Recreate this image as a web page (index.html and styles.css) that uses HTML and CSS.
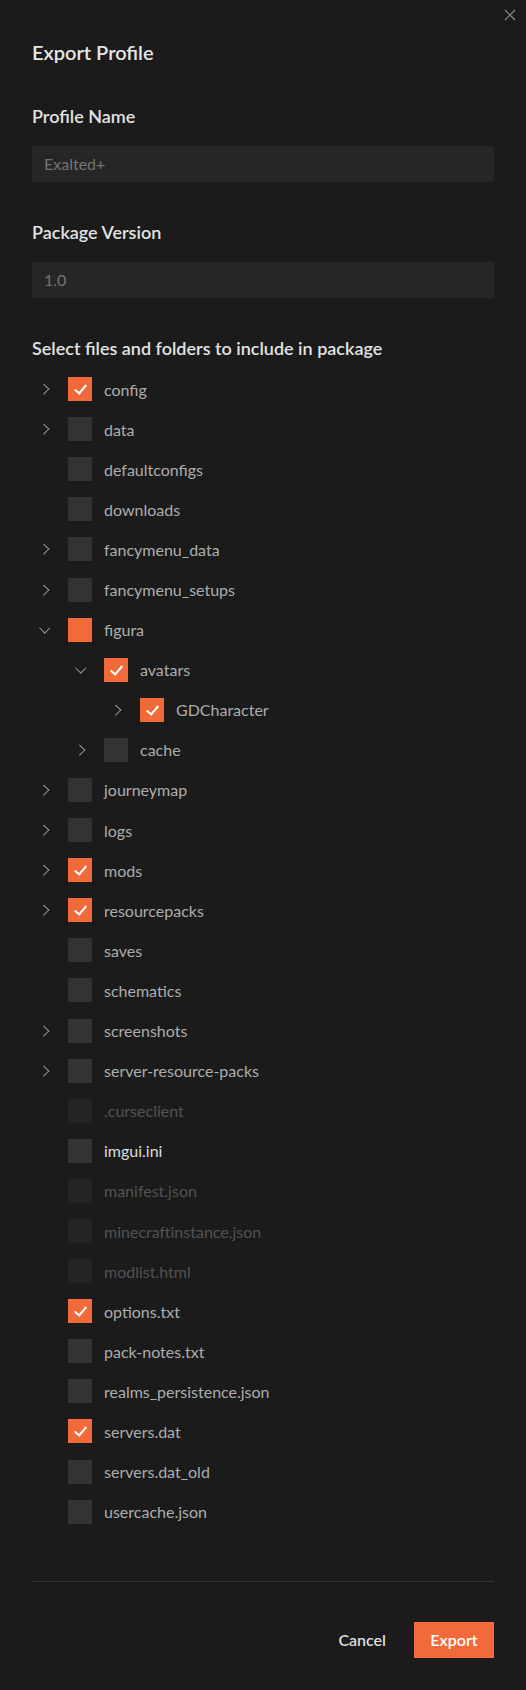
FILE: index.html
```html
<!DOCTYPE html>
<html>
<head>
<meta charset="utf-8">
<link rel="stylesheet" href="styles.css">
</head>
<body>
<div class="dialog">
  <button class="close" aria-label="Close">
    <svg width="12" height="12" viewBox="0 0 12 12"><path d="M1 1L11 11M11 1L1 11" stroke="#8a8a8a" stroke-width="1.2" fill="none"/></svg>
  </button>
  <h1 class="title">Export Profile</h1>

  <label class="label">Profile Name</label>
  <div class="input">Exalted+</div>

  <label class="label">Package Version</label>
  <div class="input">1.0</div>

  <label class="label">Select files and folders to include in package</label>

  <ul class="tree">
    <li class="row"><span class="chev right"></span><span class="cb on"></span><span class="name">config</span></li>
    <li class="row"><span class="chev right"></span><span class="cb"></span><span class="name">data</span></li>
    <li class="row"><span class="chev"></span><span class="cb"></span><span class="name">defaultconfigs</span></li>
    <li class="row"><span class="chev"></span><span class="cb"></span><span class="name">downloads</span></li>
    <li class="row"><span class="chev right"></span><span class="cb"></span><span class="name">fancymenu_data</span></li>
    <li class="row"><span class="chev right"></span><span class="cb"></span><span class="name">fancymenu_setups</span></li>
    <li class="row"><span class="chev down"></span><span class="cb partial"></span><span class="name">figura</span></li>
    <li class="row lvl1"><span class="chev down"></span><span class="cb on"></span><span class="name">avatars</span></li>
    <li class="row lvl2"><span class="chev right"></span><span class="cb on"></span><span class="name">GDCharacter</span></li>
    <li class="row lvl1"><span class="chev right"></span><span class="cb"></span><span class="name">cache</span></li>
    <li class="row"><span class="chev right"></span><span class="cb"></span><span class="name">journeymap</span></li>
    <li class="row"><span class="chev right"></span><span class="cb"></span><span class="name">logs</span></li>
    <li class="row"><span class="chev right"></span><span class="cb on"></span><span class="name">mods</span></li>
    <li class="row"><span class="chev right"></span><span class="cb on"></span><span class="name">resourcepacks</span></li>
    <li class="row"><span class="chev"></span><span class="cb"></span><span class="name">saves</span></li>
    <li class="row"><span class="chev"></span><span class="cb"></span><span class="name">schematics</span></li>
    <li class="row"><span class="chev right"></span><span class="cb"></span><span class="name">screenshots</span></li>
    <li class="row"><span class="chev right"></span><span class="cb"></span><span class="name">server-resource-packs</span></li>
    <li class="row disabled"><span class="chev"></span><span class="cb"></span><span class="name">.curseclient</span></li>
    <li class="row hover"><span class="chev"></span><span class="cb"></span><span class="name">imgui.ini</span></li>
    <li class="row disabled"><span class="chev"></span><span class="cb"></span><span class="name">manifest.json</span></li>
    <li class="row disabled"><span class="chev"></span><span class="cb"></span><span class="name">minecraftinstance.json</span></li>
    <li class="row disabled"><span class="chev"></span><span class="cb"></span><span class="name">modlist.html</span></li>
    <li class="row"><span class="chev"></span><span class="cb on"></span><span class="name">options.txt</span></li>
    <li class="row"><span class="chev"></span><span class="cb"></span><span class="name">pack-notes.txt</span></li>
    <li class="row"><span class="chev"></span><span class="cb"></span><span class="name">realms_persistence.json</span></li>
    <li class="row"><span class="chev"></span><span class="cb on"></span><span class="name">servers.dat</span></li>
    <li class="row"><span class="chev"></span><span class="cb"></span><span class="name">servers.dat_old</span></li>
    <li class="row"><span class="chev"></span><span class="cb"></span><span class="name">usercache.json</span></li>
  </ul>

  <div class="footer">
    <button class="btn cancel">Cancel</button>
    <button class="btn primary">Export</button>
  </div>
</div>
</body>
</html>
```

FILE: styles.css
```css
* { box-sizing: border-box; }
html, body {
  margin: 0;
  padding: 0;
  background: #1b1b1b;
}
body {
  font-family: Lato, "Open Sans", sans-serif;
  color: #aaaaaa;
}
.dialog {
  position: relative;
  width: 526px;
  min-height: 1690px;
  padding: 38px 32px 32px 32px;
  display: flex;
  flex-direction: column;
}
.close {
  position: absolute;
  top: 8px;
  right: 9px;
  width: 14px;
  height: 14px;
  padding: 1px;
  border: 0;
  background: none;
  display: flex;
}
.title {
  margin: 0 0 38px;
  font-size: 20px;
  line-height: 28px;
  font-weight: 600;
  color: #e6e6e6;
}
.label {
  display: block;
  font-size: 18px;
  line-height: 24px;
  font-weight: 600;
  color: #e2e2e2;
  margin-bottom: 18px;
}
.input {
  height: 36px;
  background: #262626;
  color: #747474;
  font-size: 16px;
  line-height: 36px;
  padding-left: 12px;
  margin-bottom: 38px;
}
.tree {
  list-style: none;
  margin: -9px 0 0;
  padding: 0;
}
.row {
  height: 40.1px;
  display: flex;
  align-items: center;
  gap: 12px;
  font-size: 16px;
  color: #adadad;
}
.row.lvl1 { padding-left: 36px; }
.row.lvl2 { padding-left: 72px; }
.chev {
  width: 24px;
  height: 24px;
  position: relative;
  flex: none;
}
.chev.right::before {
  content: "";
  position: absolute;
  left: 7.5px;
  top: 8px;
  width: 6.5px;
  height: 6.5px;
  border-right: 1.8px solid #9a9a9a;
  border-top: 1.8px solid #9a9a9a;
  transform: rotate(45deg);
}
.chev.down::before {
  content: "";
  position: absolute;
  left: 8.5px;
  top: 6px;
  width: 6.5px;
  height: 6.5px;
  border-right: 1.8px solid #9a9a9a;
  border-bottom: 1.8px solid #9a9a9a;
  transform: rotate(45deg);
}
.cb {
  width: 24px;
  height: 24px;
  flex: none;
  background: #333333;
  position: relative;
}
.cb.on, .cb.partial { background: #f26a3a; }
.cb.on::after {
  content: "";
  position: absolute;
  left: 8.5px;
  top: 5px;
  width: 5px;
  height: 10px;
  border-right: 2.2px solid #fff;
  border-bottom: 2.2px solid #fff;
  transform: rotate(40deg);
}
.row.disabled .cb { background: #242424; }
.row.disabled .name { color: #525252; }
.row.hover .name { color: #dcdcdc; }
.footer {
  margin-top: 49px;
  border-top: 1px solid #333333;
  padding-top: 40px;
  display: flex;
  justify-content: flex-end;
  gap: 12px;
}
.btn {
  height: 36px;
  padding: 0 16px;
  border: 0;
  font-family: Lato, "Open Sans", sans-serif;
  font-size: 16px;
  font-weight: 600;
  cursor: pointer;
}
.btn.cancel {
  background: transparent;
  color: #dedede;
}
.btn.primary {
  background: #f26a3a;
  color: #ffffff;
  width: 80px;
}
```
